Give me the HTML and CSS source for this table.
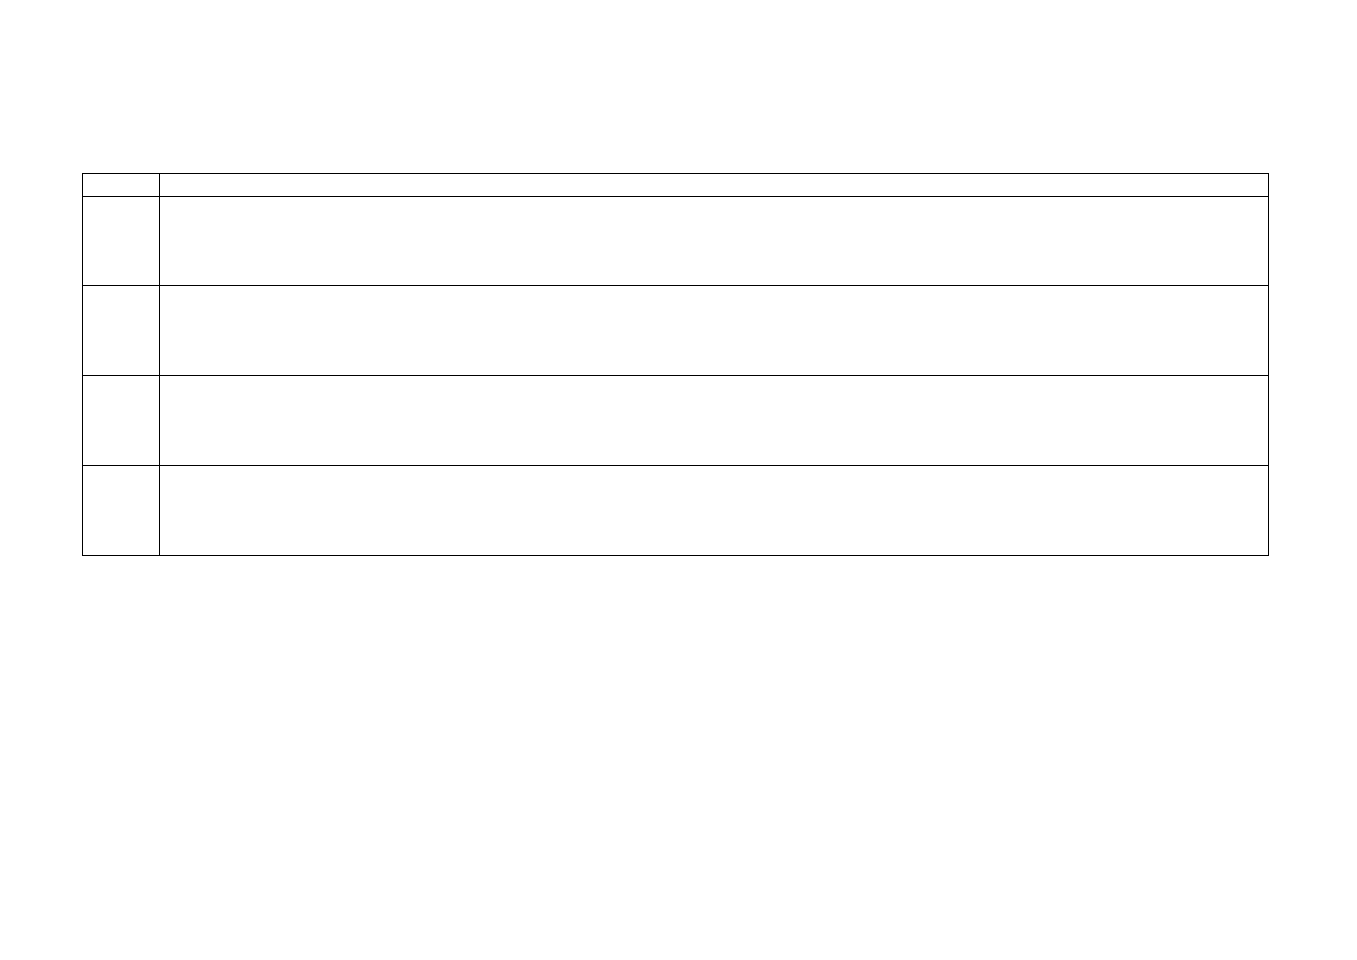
FILE: index.html
```html
<!DOCTYPE html>
<html lang="en">
<head>
  <meta charset="UTF-8" />
  <title>Table</title>
  <link rel="stylesheet" href="styles.css">
</head>
<body>
  <table class="sheet">
    <tr class="head"><td class="num"></td><td></td></tr>
    <tr class="row r1"><td class="num"></td><td></td></tr>
    <tr class="row"><td class="num"></td><td></td></tr>
    <tr class="row"><td class="num"></td><td></td></tr>
    <tr class="row"><td class="num"></td><td></td></tr>
  </table>
</body>
</html>
```

FILE: styles.css
```css
body {
  margin: 0;
  background: #fff;
  font-family: "Liberation Sans", Arial, sans-serif;
}
.sheet {
  border-collapse: collapse;
  margin: 173px 0 0 82px;
  width: 1187px;
}
.sheet td {
  border: 1px solid #000;
  padding: 0;
}
.num { width: 76px; }
.head td { height: 22px; }
.row td { height: 89px; }
.r1 td { height: 88px; }
```
